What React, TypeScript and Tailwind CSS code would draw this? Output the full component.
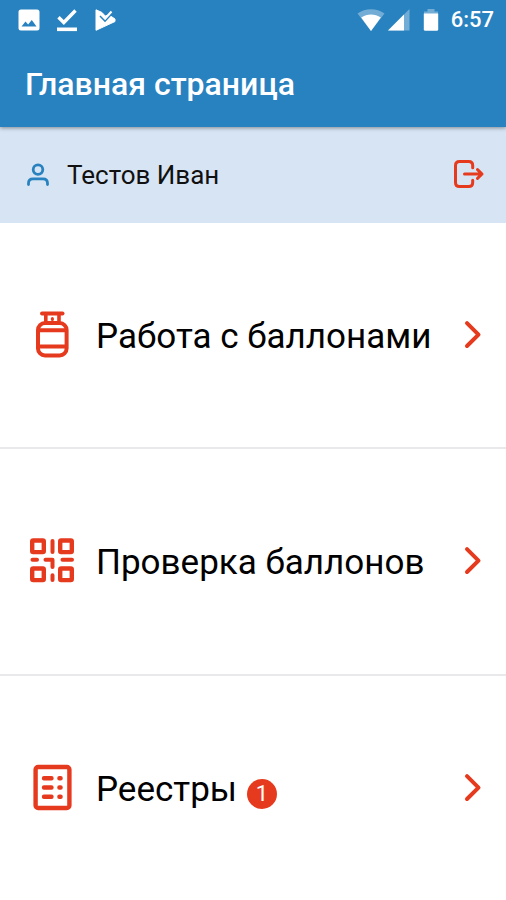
import type { ReactNode } from 'react'

const RED = '#e63a1e'

function CylinderIcon() {
  return (
    <svg viewBox="0 0 48 48" className="w-12 h-12" fill="none" stroke={RED} strokeWidth="4" strokeLinecap="round" strokeLinejoin="round" aria-hidden="true">
      <path d="M14 2.6h20.500" />
      <path d="M17.800 3v8M31 3v8" strokeWidth="3.6" />
      <path d="M24.4 7.400v1.2" strokeWidth="3" />
      <rect x="10" y="12" width="28.600" height="32.4" rx="7" />
      <path d="M11 19.200h27M11 35.400h27" />
    </svg>
  )
}

function QrIcon() {
  return (
    <svg viewBox="0 0 48 48" className="w-12 h-12" fill="none" stroke={RED} strokeWidth="4.4" strokeLinecap="round" strokeLinejoin="round" aria-hidden="true">
      <rect x="4.200" y="3.500" width="11.600" height="11.600" rx="1" />
      <rect x="32.200" y="3.500" width="11.600" height="11.600" rx="1" />
      <rect x="4.200" y="31.500" width="11.600" height="11.600" rx="1" />
      <rect x="32.200" y="31.500" width="11.600" height="11.600" rx="1" />
      <path d="M24.500 4v11M4.500 22.800H9M17.500 22.800h7V30M34.500 22.800H44M24.500 38.200v4.800" strokeWidth="4" />
    </svg>
  )
}

function ListIcon() {
  return (
    <svg viewBox="0 0 48 48" className="w-12 h-12" fill="none" stroke={RED} strokeWidth="4.4" strokeLinecap="round" strokeLinejoin="round" aria-hidden="true">
      <rect x="7.600" y="3" width="33.800" height="41" rx="2.500" />
      <path d="M16 14.200h7.500M16 23.500h7.500M16 32.800h7.500M31.400 14.200h1.200M31.400 23.500h1.200M31.400 32.800h1.200" />
    </svg>
  )
}

function Chevron() {
  return (
    <svg viewBox="0 0 20 32" className="w-5 h-8 shrink-0" fill="none" stroke={RED} strokeWidth="4" strokeLinecap="round" strokeLinejoin="round" aria-hidden="true">
      <path d="M5 4.200 16.500 15.600 5 27" />
    </svg>
  )
}

function StatusBar() {
  return (
    <div className="flex items-center h-10 pl-4 pr-3 text-white">
      <div className="flex items-center gap-3">
        <svg viewBox="0 0 26 26" className="w-[26px] h-[26px]" fill="white" aria-hidden="true">
          <path fillRule="evenodd" d="M5 2.5h16a2.5 2.5 0 0 1 2.5 2.5v16a2.5 2.5 0 0 1-2.5 2.500H5A2.500 2.500 0 0 1 2.500 21V5A2.500 2.500 0 0 1 5 2.500ZM5.500 19.500h15L15.800 13l-3.700 4.600-2.600-3Z" />
        </svg>
        <svg viewBox="0 0 26 26" className="w-[26px] h-[26px]" fill="none" stroke="white" aria-hidden="true">
          <path d="M4.500 10.200 9.800 15.500 21.500 3.500" strokeWidth="3.4" />
          <path d="M3 22.300h20" strokeWidth="3.6" />
        </svg>
        <svg viewBox="0 0 26 26" className="w-[26px] h-[26px]" aria-hidden="true">
          <path d="M4 2.800 10 5.500 13.200 9 17 8 23 12v2.500L4 23.300Z" fill="white" stroke="white" strokeLinejoin="round" />
          <path d="m8 9 5 5 8-8.500" stroke="#2882bf" strokeWidth="1.600" fill="none" />
          <path d="m9 7 4.200 4.400L19.500 4.500" stroke="white" strokeWidth="2.200" fill="none" />
        </svg>
      </div>
      <div className="ml-auto flex items-center">
        <svg viewBox="0 0 28 24" className="w-7 h-6" aria-hidden="true">
          <path d="M14 23 .5 5.500C8-.2 20-.2 27.500 5.500Z" fill="white" opacity=".35" />
          <path d="M14 23 4.200 9.500c6-4 13.600-4 19.600 0Z" fill="white" />
        </svg>
        <svg viewBox="0 0 24 24" className="w-6 h-6 ml-0.5" fill="white" aria-hidden="true">
          <path d="M22.500 1v21.500H1Z" opacity=".35" />
          <path d="M17 6.500v16H1Z" />
        </svg>
        <svg viewBox="0 0 16 24" className="w-4 h-6 ml-3" fill="white" aria-hidden="true">
          <path d="M4.500 1h7v2.500H15V6H1V3.500h3.500Z" opacity=".35" />
          <path d="M.8 5.500h14.400v15.800q0 1.500-1.500 1.500H2.300q-1.500 0-1.500-1.500Z" />
        </svg>
        <span className="ml-3 text-[22px] leading-6 font-medium">6:57</span>
      </div>
    </div>
  )
}

function UserBar() {
  return (
    <div className="flex items-center h-24 px-5 bg-[#d7e4f4]">
      <svg viewBox="0 0 28 28" className="w-7 h-7 ml-1" fill="none" stroke="#2882bf" strokeWidth="2.800" strokeLinecap="round" aria-hidden="true">
        <circle cx="14" cy="8.600" r="4.800" />
        <path d="M4.500 23.500v-1.200q0-4.500 4.500-4.500h10q4.500 0 4.500 4.500v1.200" />
      </svg>
      <span className="ml-[15px] text-[26px] leading-8 text-[#111]">Тестов Иван</span>
      <button type="button" aria-label="Выйти" className="ml-auto">
        <svg viewBox="0 0 34 34" className="w-[34px] h-[34px]" fill="none" stroke={RED} strokeWidth="3" strokeLinecap="round" strokeLinejoin="round" aria-hidden="true">
          <path d="M20.700 9.800V7.500q0-4-4-4H7.500q-4 0-4 4v17q0 4 4 4h9.200q4 0 4-4v-2.300" />
          <path d="M12.500 16h17.500M25.500 11.600 30 16l-4.500 4.400" />
        </svg>
      </button>
    </div>
  )
}

type Item = { title: string; icon: ReactNode; count?: number }

const ITEMS: Item[] = [
  { title: 'Работа с баллонами', icon: <CylinderIcon /> },
  { title: 'Проверка баллонов', icon: <QrIcon /> },
  { title: 'Реестры', icon: <ListIcon />, count: 1 },
]

export default function App() {
  return (
    <div className="min-h-screen flex flex-col bg-white font-[Roboto,sans-serif]">
      <header className="relative bg-[#2882bf] shadow-[0_1px_4px_rgba(0,0,0,0.4)]">
        <StatusBar />
        <h1 className="px-[25px] pt-[26px] pb-[25px] text-[32px] leading-9 font-medium text-white">Главная страница</h1>
      </header>
      <UserBar />
      <nav className="flex-1 flex flex-col divide-y-2 divide-[#e9e9eb]">
        {ITEMS.map(item => (
          <a key={item.title} href="#" className="flex-1 flex items-center pl-7 pr-6 py-6 text-black">
            {item.icon}
            <span className="ml-5 pt-1 text-[35px] leading-10">{item.title}</span>
            {item.count && (
              <span className="ml-2.5 mt-3 w-[30px] h-[30px] rounded-full bg-[#e63a1e] flex items-center justify-center text-[22px] leading-none text-white">
                {item.count}
              </span>
            )}
            <span className="ml-auto"><Chevron /></span>
          </a>
        ))}
      </nav>
    </div>
  )
}
